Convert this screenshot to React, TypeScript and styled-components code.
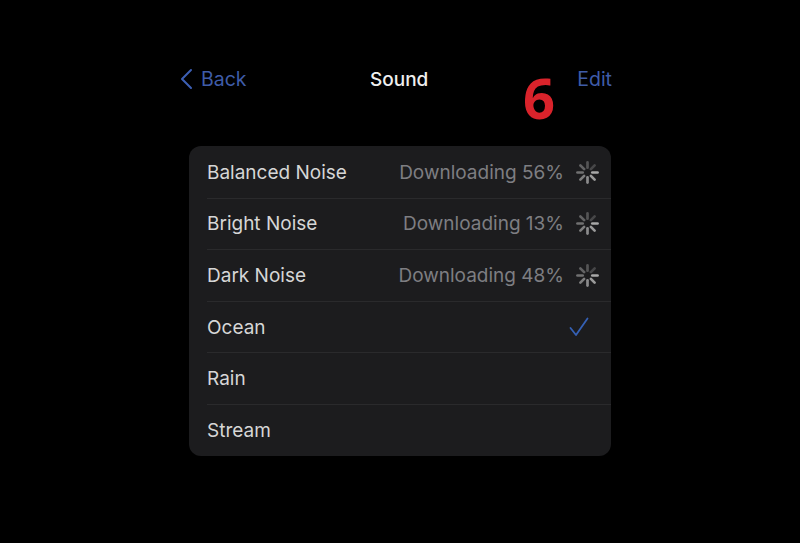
import React from "react";
import styled, { createGlobalStyle } from "styled-components";

const GlobalStyle = createGlobalStyle`
	html, body {
		margin: 0;
		padding: 0;
		background: #000;
	}
	body {
		font-family: "Inter", "Liberation Sans", sans-serif;
	}
`;

const rows = [
	{ name: "Balanced Noise", status: "Downloading 56%", spin: true },
	{ name: "Bright Noise", status: "Downloading 13%", spin: true },
	{ name: "Dark Noise", status: "Downloading 48%", spin: true },
	{ name: "Ocean", checked: true },
	{ name: "Rain" },
	{ name: "Stream" },
];

const Spinner = () => (
	<SpinnerSvg viewBox="0 0 24 24">
		{Array.from({ length: 8 }).map((_, i) => (
			<line
				key={i}
				x1="12"
				y1="1.5"
				x2="12"
				y2="7"
				stroke="#a8a8a8"
				strokeWidth="2.8"
				strokeLinecap="round"
				opacity={1 - ((i + 6) % 8) * 0.1}
				transform={`rotate(${i * 45} 12 12)`}
			/>
		))}
	</SpinnerSvg>
);

const App = () => {
	return (
		<Page>
			<GlobalStyle />
			<NavBar>
				<BackLink>
					<svg width="14" height="22" viewBox="0 0 14 22" fill="none">
						<path d="M12 2L3 11L12 20" stroke="#3c5fb4" strokeWidth="2" strokeLinecap="round" strokeLinejoin="round" />
					</svg>
					<NavText>Back</NavText>
				</BackLink>
				<Title>Sound</Title>
				<EditLink>Edit</EditLink>
				<Badge>6</Badge>
			</NavBar>
			<List>
				{rows.map((row) => (
					<Row key={row.name}>
						<Name>{row.name}</Name>
						<Right>
							{row.status && <Status>{row.status}</Status>}
							{row.spin && <Spinner />}
							{row.checked && (
								<CheckSvg viewBox="0 0 20 20" fill="none">
									<path d="M1.5 11L7 18L18.5 1.5" stroke="#3560b4" strokeWidth="1.8" strokeLinecap="round" strokeLinejoin="round" />
								</CheckSvg>
							)}
						</Right>
					</Row>
				))}
			</List>
		</Page>
	);
};

export default App;

const Page = styled.div`
	width: 800px;
	height: 543px;
	background: #000;
	overflow: hidden;
	display: flex;
	flex-direction: column;
	align-items: center;
	padding-top: 62px;
	box-sizing: border-box;
`;

const NavBar = styled.div`
	position: relative;
	width: 433px;
	height: 34px;
	margin-left: -9px;
	display: grid;
	grid-template-columns: 191px 60px 1fr;
	align-items: center;
`;

const BackLink = styled.div`
	display: flex;
	align-items: center;
	gap: 8px;
`;

const NavText = styled.span`
	font-size: 19.5px;
	color: #3f5ca8;
`;

const EditLink = styled(NavText)`
	justify-self: end;
`;

const Title = styled.span`
	font-size: 19px;
	font-weight: 500;
	color: #efefef;
	white-space: nowrap;
`;

const Badge = styled.span`
	position: absolute;
	left: 344px;
	top: 4px;
	font-family: "Open Sans", sans-serif;
	font-size: 56px;
	line-height: 62px;
	font-weight: 700;
	color: #d9232b;
`;

const List = styled.div`
	width: 422px;
	margin-top: 50px;
	padding-top: 1px;
	background: #1c1c1e;
	border-radius: 12px;
	overflow: hidden;
`;

const Row = styled.div`
	height: 51.6px;
	margin-left: 18px;
	padding-right: 12px;
	display: flex;
	align-items: center;
	justify-content: space-between;
	border-bottom: 1px solid #2a2a2c;
	box-sizing: border-box;

	&:last-child {
		height: 51px;
		border-bottom: none;
	}
`;

const Name = styled.span`
	font-size: 19px;
	color: #d6d6d6;
`;

const Right = styled.div`
	display: flex;
	align-items: center;
	gap: 12px;
`;

const Status = styled.span`
	font-size: 19px;
	color: #7e7e82;
`;

const SpinnerSvg = styled.svg`
	width: 23px;
	height: 23px;
`;

const CheckSvg = styled.svg`
	width: 20px;
	height: 20px;
	margin-right: 10px;
`;
